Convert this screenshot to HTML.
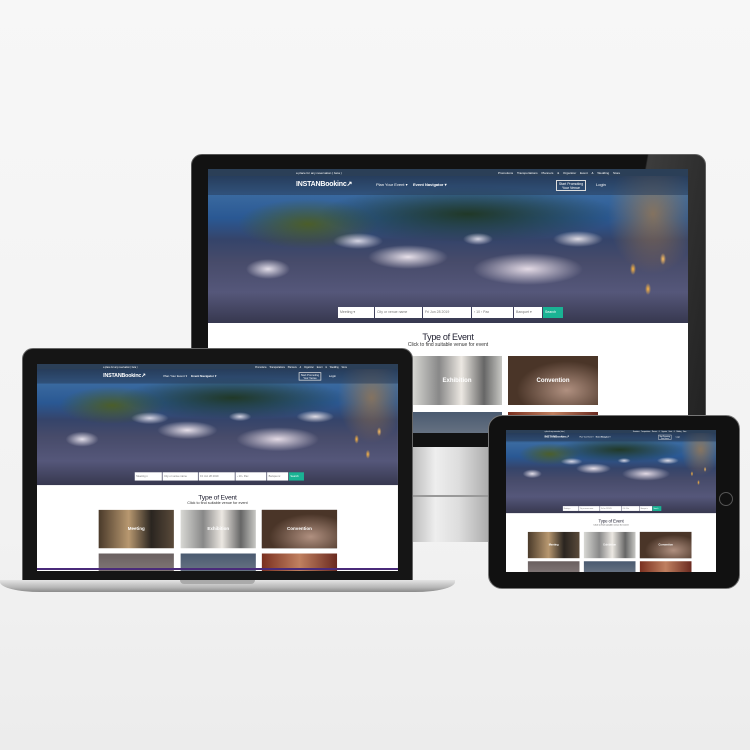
<!DOCTYPE html>
<html><head><meta charset="utf-8"><style>
*{margin:0;padding:0;box-sizing:border-box}
body{width:750px;height:750px;overflow:hidden;background:linear-gradient(#f7f7f7,#f2f2f2 70%,#ececec);font-family:"Liberation Sans",sans-serif;position:relative}
.abs{position:absolute}
.site{position:absolute;left:0;top:0;width:480px;background:#fff;overflow:hidden;transform-origin:0 0}
.hero{position:absolute;left:0;top:0;width:480px;height:154px;
background:
radial-gradient(ellipse 22px 10px at 60px 100px,rgba(235,230,240,.95),transparent),
radial-gradient(ellipse 40px 12px at 200px 88px,rgba(240,232,240,.95),transparent),
radial-gradient(ellipse 55px 16px at 320px 100px,rgba(235,225,235,.95),transparent),
radial-gradient(ellipse 25px 8px at 370px 70px,rgba(240,235,240,.9),transparent),
radial-gradient(ellipse 25px 8px at 150px 72px,rgba(230,228,240,.9),transparent),
radial-gradient(ellipse 15px 6px at 270px 70px,rgba(230,228,240,.9),transparent),
radial-gradient(ellipse 3px 6px at 440px 120px,#ffb640,transparent),
radial-gradient(ellipse 3px 6px at 425px 100px,#ffb640,transparent),
radial-gradient(ellipse 3px 6px at 455px 90px,#ffc060,transparent),
radial-gradient(ellipse 45px 60px at 445px 45px,rgba(190,130,60,.6),transparent),
radial-gradient(ellipse 150px 28px at 260px 45px,rgba(30,50,20,.85),transparent),
radial-gradient(ellipse 70px 25px at 100px 55px,rgba(80,95,25,.85),transparent),
linear-gradient(180deg,#1f2f48 0,#3a6aa0 16%,#2a5893 32%,#35446a 46%,#474b6a 60%,#55577a 80%,#37384f 100%)}
.strip{position:absolute;left:0;top:0;width:480px;height:7px;background:#2b3f57}
.nav{position:absolute;left:0;top:7px;width:480px;height:19px;background:rgba(40,60,90,.55)}
.logo{position:absolute;left:88px;top:4px;color:#fff;font-size:7px;font-weight:bold;letter-spacing:-.2px}
.mi{position:absolute;top:6px;color:#fff;font-size:4px}
.btn{position:absolute;left:348px;top:4px;width:30px;height:11px;border:1px solid #ddd;color:#fff;font-size:3.5px;text-align:center;padding-top:1px}
.sb{position:absolute;top:138px;height:11px;background:#fff;font-size:3.5px;color:#777;padding:3px 2px}
.go{background:#1ab394;color:#fff}
.t1{position:absolute;top:163px;width:480px;text-align:center;font-size:9px;color:#223;letter-spacing:-.3px}
.t2{position:absolute;top:173px;width:480px;text-align:center;font-size:5px;color:#333}
.card{position:absolute;width:90px;height:49px;top:187px;color:#fff;font-size:6px;font-weight:bold;display:flex;align-items:center;justify-content:center}
.c1,.c4{left:106px}.c2,.c5{left:204px}.c3,.c6{left:300px}
.c4,.c5,.c6{top:243px}
.c1{background:linear-gradient(90deg,#4a3a2a,#b89870 40%,#2a2520 70%,#5a4a3a)}
.c2{background:linear-gradient(90deg,#d8d8d4,#888 30%,#ece8e2 55%,#666 80%,#c8c8c4)}
.c3{background:radial-gradient(ellipse at 65% 70%,#b09080,#4a3528 60%),#1e1a1a}
.c4{background:linear-gradient(#6a6060,#9a9090)}
.c5{background:linear-gradient(#4a5a70,#8a9098)}
.c6{background:linear-gradient(90deg,#7a3020,#c08060,#6a2a20)}
.L .hero{height:161px}.L .sb{top:144px}.L .t1{top:172px}.L .t2{top:182px}
.L .card{width:100px;height:51px;top:194px}
.L .c1,.L .c4{left:82px}.L .c2,.L .c5{left:191px}.L .c3,.L .c6{left:299px}
.L .c4,.L .c5,.L .c6{top:252px}
.T .hero{height:190px}.T .sb{top:174px}.T .t1{top:203px;font-size:10px}.T .t2{top:214px}
.T .card{width:118px;height:60px;top:233px}
.T .c1,.T .c4{left:50px}.T .c2,.T .c5{left:178px}.T .c3,.T .c6{left:306px}
.T .c4,.T .c5,.T .c6{top:300px}
</style></head><body>

<div class="abs" style="left:191px;top:154px;width:515px;height:295px;background:#121212;border-radius:11px;border:1px solid #555"></div>
<div class="abs" style="left:600px;top:154px;width:106px;height:295px;background:linear-gradient(100deg,transparent 30%,rgba(140,140,140,.35) 31%,rgba(90,90,90,.2));border-radius:0 11px 0 0"></div>
<div class="abs" style="left:412px;top:447px;width:78px;height:95px;background:linear-gradient(90deg,#bbb,#eee 30%,#ddd 60%,#aaa);"></div>
<div class="abs" style="left:412px;top:495px;width:78px;height:2px;background:#999"></div>
<div class="abs" style="left:208px;top:169px;width:480px;height:264px;overflow:hidden">
<div class="site" style="height:264px"></div></div>

<div class="abs" style="left:22px;top:348px;width:391px;height:234px;background:#151515;border-radius:11px 11px 0 0;border:1px solid #666"></div>
<div class="abs" style="left:0px;top:580px;width:455px;height:12px;background:linear-gradient(#e4e4e4,#b8b8b8 60%,#8a8a8a);border-radius:0 0 40px 40px/0 0 10px 10px"></div>
<div class="abs" style="left:180px;top:580px;width:75px;height:4px;background:#aaa;border-radius:0 0 4px 4px"></div>
<div class="abs" style="left:37px;top:364px;width:361px;height:207px;overflow:hidden">
<div class="site L" style="height:276px;transform:scale(.752)"></div></div>
<div class="abs" style="left:37px;top:568px;width:361px;height:2px;background:#4a2a7a"></div>

<div class="abs" style="left:488px;top:415px;width:252px;height:174px;background:#111;border-radius:14px;border:1px solid #777"></div>
<div class="abs" style="left:719px;top:492px;width:14px;height:14px;border:1px solid #555;border-radius:50%"></div>
<div class="abs" style="left:506px;top:430px;width:210px;height:142px;overflow:hidden">
<div class="site T" style="height:325px;transform:scale(.4375)"></div></div>

<script>
var s=`<div class="hero"></div>
<div class="strip"><span style="position:absolute;left:88px;top:1.5px;color:#fff;font-size:3px">a place for any reservation ( beta )</span><span style="position:absolute;left:290px;top:1.5px;color:#fff;font-size:3px;word-spacing:3px">Promotions Transportations Planners &amp; Organizer Event &amp; Wedding Store</span></div>
<div class="nav"><div class="logo">INSTANBookinc&#x2197;</div>
<div class="mi" style="left:168px">Plan Your Event ▾</div><div class="mi" style="left:205px;font-weight:bold">Event Navigator ▾</div>
<div class="btn">Start Promoting<br>Your Venue</div><div class="mi" style="left:388px">Login</div></div>
<div class="sb" style="left:130px;width:36px">Meeting ▾</div>
<div class="sb" style="left:167px;width:47px">City or venue name</div>
<div class="sb" style="left:215px;width:48px">Fri Jun 28 2019</div>
<div class="sb" style="left:264px;width:41px">‹ 10 › Pax</div>
<div class="sb" style="left:306px;width:28px">Banquet ▾</div>
<div class="sb go" style="left:335px;width:20px">Search</div>
<div class="t1">Type of Event</div>
<div class="t2">Click to find suitable venue for event</div>
<div class="card c1">Meeting</div>
<div class="card c2">Exhibition</div>
<div class="card c3">Convention</div>
<div class="card c4"></div>
<div class="card c5"></div>
<div class="card c6"></div>`;
document.querySelectorAll('.site').forEach(function(e){e.innerHTML=s});
</script>
</body></html>
